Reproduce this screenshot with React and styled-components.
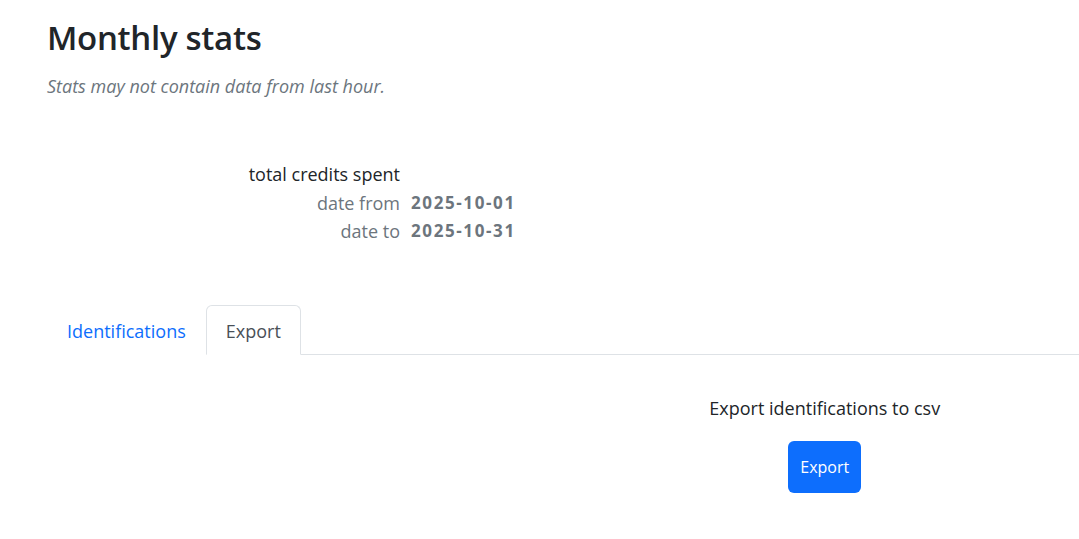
import React, { useState } from 'react'
import styled, { createGlobalStyle } from 'styled-components'

const GlobalStyle = createGlobalStyle`
  html, body {
    margin: 0;
    padding: 0;
    background: #fff;
    overflow-x: hidden;
  }
  body {
    font-family: "Open Sans", "Noto Sans", sans-serif;
    font-size: 18px;
    color: #212529;
  }
`

const Page = styled.main`
  padding: 18px 0 0 47px;
  margin-right: -5px;
`

const Title = styled.h1`
  margin: 0;
  font-size: 33px;
  font-weight: 600;
  line-height: 40px;
  color: #212529;
  letter-spacing: -0.3px;
`

const Note = styled.p`
  margin: 14px 0 0;
  font-style: italic;
  font-size: 18px;
  line-height: 28px;
  color: #6c757d;
`

const Stats = styled.dl`
  display: grid;
  grid-template-columns: 353px auto;
  column-gap: 11px;
  margin: 60px 0 0;
  line-height: 28.5px;
`

const Label = styled.dt`
  text-align: right;
  color: ${p => (p.$strong ? '#212529' : '#6c757d')};
`

const Value = styled.dd`
  margin: 0;
  font-size: 17px;
  font-weight: 700;
  letter-spacing: 1.6px;
  color: #6c757d;
`

const Tabs = styled.ul`
  display: flex;
  list-style: none;
  margin: 59px 0 0;
  padding: 0;
  border-bottom: 1px solid #dee2e6;
`

const Tab = styled.li`
  margin-bottom: -1px;
`

const TabLink = styled.button`
  display: block;
  font: inherit;
  padding: 12px 19px 9px;
  line-height: 27px;
  background: #fff;
  cursor: pointer;
  border: 1px solid ${p => (p.$active ? '#dee2e6' : 'transparent')};
  border-bottom-color: ${p => (p.$active ? '#fff' : 'transparent')};
  border-radius: 6px 6px 0 0;
  color: ${p => (p.$active ? '#495057' : '#0d6efd')};
`

const Panel = styled.section`
  display: grid;
  grid-template-columns: 1fr 1fr;
  padding-top: 39px;
`

const ExportBox = styled.div`
  grid-column: 2;
  display: flex;
  flex-direction: column;
  align-items: center;
  gap: 19px;
`

const ExportText = styled.p`
  margin: 0;
  line-height: 28px;
`

const Button = styled.button`
  font-family: inherit;
  font-size: 16px;
  color: #fff;
  background: #0d6efd;
  border: none;
  border-radius: 6px;
  width: 73px;
  height: 52px;
  cursor: pointer;
`

export default function App() {
  const [tab, setTab] = useState('export')
  return (
    <>
      <GlobalStyle />
      <Page>
        <Title>Monthly stats</Title>
        <Note>Stats may not contain data from last hour.</Note>
        <Stats>
          <Label $strong>total credits spent</Label>
          <Value />
          <Label>date from</Label>
          <Value>2025-10-01</Value>
          <Label>date to</Label>
          <Value>2025-10-31</Value>
        </Stats>
        <Tabs>
          <Tab>
            <TabLink $active={tab === 'ident'} onClick={() => setTab('ident')}>Identifications</TabLink>
          </Tab>
          <Tab>
            <TabLink $active={tab === 'export'} onClick={() => setTab('export')}>Export</TabLink>
          </Tab>
        </Tabs>
        {tab === 'export' && (
          <Panel>
            <ExportBox>
              <ExportText>Export identifications to csv</ExportText>
              <Button>Export</Button>
            </ExportBox>
          </Panel>
        )}
      </Page>
    </>
  )
}
